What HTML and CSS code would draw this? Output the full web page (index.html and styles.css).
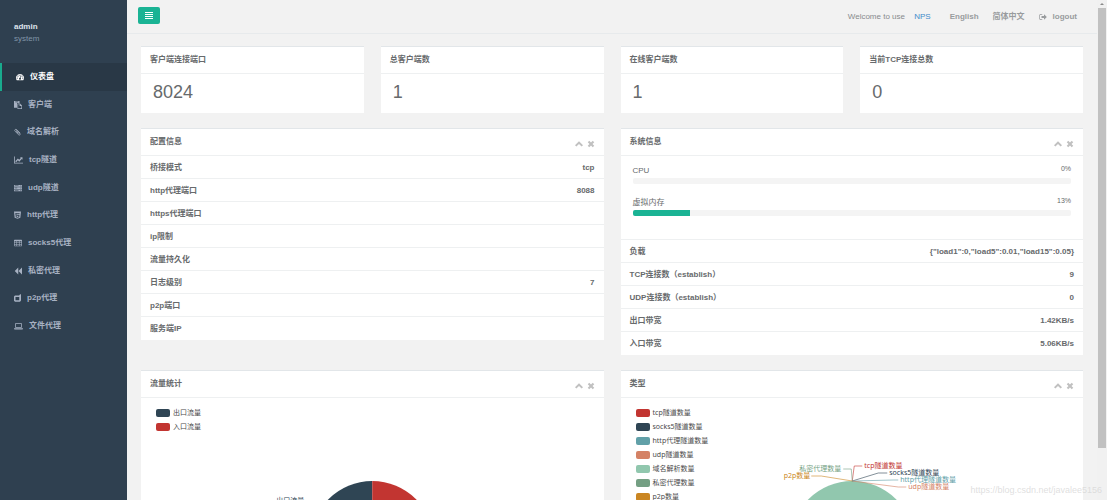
FILE: index.html
```html
<!DOCTYPE html>
<html lang="zh-CN">
<head>
<meta charset="utf-8">
<title>NPS</title>
<link rel="stylesheet" href="styles.css">
</head>
<body>
<div class="app">
  <aside class="sidebar">
    <div class="profile">
      <strong class="profile-name">admin</strong>
      <span class="profile-role">system</span>
    </div>
    <nav class="menu">
      <a class="menu-item active" href="#"><svg class="icon" viewBox="0 0 16 16"><path fill-rule="evenodd" d="M8 2a8 8 0 0 0-6.800 12.200c.2.400.5.500.9.500h11.800c.4 0 .7-.1.900-.5A8 8 0 0 0 8 2zM8 3.300a1.100 1.100 0 1 1 0 2.300 1.100 1.100 0 0 1 0-2.300zM4 5a1.100 1.100 0 1 1 0 2.300A1.100 1.100 0 0 1 4 5zm8 0a1.100 1.100 0 1 1 0 2.300A1.100 1.100 0 0 1 12 5zM2.300 9a1.100 1.100 0 1 1 0 2.300 1.100 1.100 0 0 1 0-2.300zm11.400 0a1.100 1.100 0 1 1 0 2.300 1.100 1.100 0 0 1 0-2.300zM8.800 6l1 .3-.9 3.600a1.800 1.800 0 1 1-1.200-.2z"/></svg>仪表盘</a>
      <a class="menu-item" href="#"><svg class="icon" viewBox="0 0 16 16"><path fill-rule="evenodd" d="M0 0h11v4H6v9.500H0zM2.500 1.200v1.300h6V1.200z"/><path fill-rule="evenodd" d="M7 5h5l4 4v7H7zm1.300 1.300v8.400h6.400V10h-3.500V6.300z"/></svg>客户端</a>
      <a class="menu-item" href="#"><svg class="icon icon-narrow" viewBox="0 0 14 16"><path class="stroke" d="M12.500 10.500L5.500 3.300a2.300 2.300 0 0 0-3.300 3.300l7.200 7a1.700 1.700 0 0 0 2.500-2.400L5.700 5.300a.8.8 0 0 0-1.200 1.200L9 11"/></svg>域名解析</a>
      <a class="menu-item" href="#"><svg class="icon icon-wide" viewBox="0 0 18 16"><path d="M0 1h1.600v12.400H18V15H0z"/><path d="M17 2.500V7.500l-1.600-1.500-5 5.300-2.600-2.600-3.400 3.600-2-2 5.400-5.300 2.600 2.600 3.200-3.500L12 2.500z"/></svg>tcp隧道</a>
      <a class="menu-item" href="#"><svg class="icon" viewBox="0 0 16 16"><path fill-rule="evenodd" d="M0 2h16v3.500H0zM0 6.500h16V10H0zM0 11h16v3.500H0zM1.500 3.200v1H9v-1zm0 4.500v1h5v-1zm0 4.500v1H9v-1zM13 3v1.300h1.500V3zm0 4.500v1.300h1.500V7.500zm0 4.500v1.300h1.500V12z"/></svg>udp隧道</a>
      <a class="menu-item" href="#"><svg class="icon icon-narrow" viewBox="0 0 14 16"><path fill-rule="evenodd" d="M0 1h14l-1.300 12.500L7 15.500l-5.700-2zM2.700 4l.5 5.300h5.700l-.2 2-1.700.5-1.700-.5-.1-1.100H3.400l.2 2.400 3.400 1 3.400-1 .5-5.200H4.900L4.700 5.700h6.400l.2-1.700z"/></svg>http代理</a>
      <a class="menu-item" href="#"><svg class="icon" viewBox="0 0 16 16"><path fill-rule="evenodd" d="M1 1.500h14l1 1v11l-1 1H1l-1-1v-11zM1.200 4.500v2.300h3.700V4.500zm4.900 0v2.300h3.800V4.500zm5 0v2.300h3.700V4.500zM1.200 7.900v2.200h3.700V7.900zm4.900 0v2.200h3.800V7.900zm5 0v2.200h3.700V7.900zM1.200 11.200v2.200h3.700v-2.200zm4.900 0v2.200h3.800v-2.200zm5 0v2.200h3.700v-2.200z"/></svg>socks5代理</a>
      <a class="menu-item" href="#"><svg class="icon" viewBox="0 0 16 16"><path d="M8.500 1v14L1.500 8zM16 1v14L9 8z"/></svg>私密代理</a>
      <a class="menu-item" href="#"><svg class="icon icon-narrow" viewBox="0 0 14 16"><path fill-rule="evenodd" d="M14 0v13l-2 2.500H2l-2-2V5l2-2h8.500V2zM3 6v6.500h7.500V6z"/></svg>p2p代理</a>
      <a class="menu-item" href="#"><svg class="icon icon-wide" viewBox="0 0 18 16"><path fill-rule="evenodd" d="M3.500 2h11l1 1v8l-1 1h-11l-1-1V3zM4 3.500v7h10v-7z"/><path d="M0 12.700h18v1l-1 1.300H1l-1-1.300z"/></svg>文件代理</a>
    </nav>
  </aside>

  <div class="page">
    <header class="topbar">
      <button class="toggle" type="button" aria-label="Toggle menu"><svg class="icon" viewBox="0 0 8 8"><path d="M0 0h8v1H0zM0 2h8v1H0zM0 4h8v1H0zM0 6h8v1H0z"/></svg></button>
      <div class="toplinks">
        <span class="welcome">Welcome to use <a class="brand" href="#">NPS</a></span>
        <a class="toplink lang-en" href="#">English</a>
        <a class="toplink lang-zh" href="#">简体中文</a>
        <a class="toplink logout" href="#"><svg class="icon" viewBox="0 0 16 16"><path d="M6.500 2v1.400H3L1.800 4.600v6.800L3 12.600h3.500V14H2.400L.4 12V4l2-2zM10 2.500L15.700 8 10 13.500V10H5V6h5z"/></svg>logout</a>
      </div>
    </header>

    <main class="content">
      <div class="stats">
        <section class="card"><header class="card-head"><h5>客户端连接端口</h5></header><p class="stat">8024</p></section>
        <section class="card"><header class="card-head"><h5>总客户端数</h5></header><p class="stat">1</p></section>
        <section class="card"><header class="card-head"><h5>在线客户端数</h5></header><p class="stat">1</p></section>
        <section class="card"><header class="card-head"><h5>当前TCP连接总数</h5></header><p class="stat">0</p></section>
      </div>

      <div class="panels">
        <section class="card">
          <header class="card-head"><h5>配置信息</h5><div class="tools">
            <button class="tool" type="button" aria-label="Collapse"><svg class="icon" viewBox="0 0 16 16"><path d="M8 2.500l8 7.800-2.800 2.700L8 8l-5.200 5L0 10.300z"/></svg></button>
            <button class="tool" type="button" aria-label="Close"><svg class="icon" viewBox="0 0 16 16"><path d="M4.500 1.500L8 5l3.500-3.500 3 3L11 8l3.500 3.500-3 3L8 11l-3.500 3.500-3-3L5 8 1.500 4.500z"/></svg></button></div></header>
          <ul class="rows">
            <li><span>桥接模式</span><span>tcp</span></li>
            <li><span>http代理端口</span><span>8088</span></li>
            <li><span>https代理端口</span></li>
            <li><span>ip限制</span></li>
            <li><span>流量持久化</span></li>
            <li><span>日志级别</span><span>7</span></li>
            <li><span>p2p端口</span></li>
            <li><span>服务端IP</span></li>
          </ul>
        </section>

        <section class="card">
          <header class="card-head"><h5>系统信息</h5><div class="tools">
            <button class="tool" type="button" aria-label="Collapse"><svg class="icon" viewBox="0 0 16 16"><path d="M8 2.500l8 7.800-2.800 2.700L8 8l-5.200 5L0 10.300z"/></svg></button>
            <button class="tool" type="button" aria-label="Close"><svg class="icon" viewBox="0 0 16 16"><path d="M4.500 1.500L8 5l3.500-3.500 3 3L11 8l3.500 3.500-3 3L8 11l-3.500 3.500-3-3L5 8 1.500 4.500z"/></svg></button></div></header>
          <div class="meters">
            <div class="meter-label"><span>CPU</span><small>0%</small></div>
            <div class="meter"><div class="meter-fill" style="width: 0%"></div></div>
            <div class="meter-label"><span>虚拟内存</span><small>13%</small></div>
            <div class="meter"><div class="meter-fill" style="width: 13%"></div></div>
          </div>
          <ul class="rows">
            <li><span>负载</span><span>{"load1":0,"load5":0.01,"load15":0.05}</span></li>
            <li><span>TCP连接数（establish）</span><span>9</span></li>
            <li><span>UDP连接数（establish）</span><span>0</span></li>
            <li><span>出口带宽</span><span>1.42KB/s</span></li>
            <li><span>入口带宽</span><span>5.06KB/s</span></li>
          </ul>
        </section>

        <section class="card">
          <header class="card-head"><h5>流量统计</h5><div class="tools">
            <button class="tool" type="button" aria-label="Collapse"><svg class="icon" viewBox="0 0 16 16"><path d="M8 2.500l8 7.800-2.800 2.700L8 8l-5.200 5L0 10.300z"/></svg></button>
            <button class="tool" type="button" aria-label="Close"><svg class="icon" viewBox="0 0 16 16"><path d="M4.500 1.500L8 5l3.500-3.500 3 3L11 8l3.500 3.500-3 3L8 11l-3.500 3.500-3-3L5 8 1.500 4.500z"/></svg></button></div></header>
          <div class="chart">
            <svg class="plot" viewBox="0 0 462 250">
              <path class="fill-navy" d="M231 83a62 62 0 0 0 0 124z"/>
              <path class="fill-red" d="M231 83a62 62 0 0 1 0 124z"/>
              <text class="text-navy" text-anchor="end" x="163" y="105">出口流量</text>
            </svg>
            <ul class="legend">
              <li><i class="swatch navy"></i>出口流量</li>
              <li><i class="swatch red"></i>入口流量</li>
            </ul>
          </div>
        </section>

        <section class="card">
          <header class="card-head"><h5>类型</h5><div class="tools">
            <button class="tool" type="button" aria-label="Collapse"><svg class="icon" viewBox="0 0 16 16"><path d="M8 2.500l8 7.800-2.800 2.700L8 8l-5.200 5L0 10.300z"/></svg></button>
            <button class="tool" type="button" aria-label="Close"><svg class="icon" viewBox="0 0 16 16"><path d="M4.500 1.500L8 5l3.500-3.500 3 3L11 8l3.500 3.500-3 3L8 11l-3.500 3.500-3-3L5 8 1.500 4.500z"/></svg></button></div></header>
          <div class="chart">
            <svg class="plot" viewBox="0 0 462 250">
              <circle class="fill-mint" cx="231" cy="145" r="62"/>
              <path class="line-red" d="M231 83L233 68H241"/>
              <path class="line-navy" d="M231 83L257 75H266"/>
              <path class="line-teal" d="M231 83L272 82H277"/>
              <path class="line-coral" d="M231 83L277 89H285"/>
              <path class="line-green" d="M231 83L230 71H222"/>
              <path class="line-amber" d="M231 83L200 78H190"/>
              <text class="text-red" x="243" y="70">tcp隧道数量</text>
              <text class="text-navy" x="268" y="77">socks5隧道数量</text>
              <text class="text-teal" x="279" y="84">http代理隧道数量</text>
              <text class="text-coral" x="287" y="91">udp隧道数量</text>
              <text class="text-green" text-anchor="end" x="220" y="73">私密代理数量</text>
              <text class="text-amber" text-anchor="end" x="189" y="80">p2p数量</text>
            </svg>
            <ul class="legend">
              <li><i class="swatch red"></i>tcp隧道数量</li>
              <li><i class="swatch navy"></i>socks5隧道数量</li>
              <li><i class="swatch teal"></i>http代理隧道数量</li>
              <li><i class="swatch coral"></i>udp隧道数量</li>
              <li><i class="swatch mint"></i>域名解析数量</li>
              <li><i class="swatch green"></i>私密代理数量</li>
              <li><i class="swatch amber"></i>p2p数量</li>
            </ul>
          </div>
        </section>
      </div>
    </main>
  </div>

  <div class="scrollbar" aria-hidden="true">
    <div class="scroll-arrow"></div>
    <div class="scroll-thumb"></div>
  </div>
  <div class="watermark">https://blog.csdn.net/javalee5156</div>
</div>
</body>
</html>
```

FILE: styles.css
```css
* { box-sizing: border-box; }

body {
  margin: 0;
  background: #f2f2f2;
  color: #676a6c;
  font: 8px/12px "Liberation Sans", "Noto Sans CJK SC", sans-serif;
}

a { color: inherit; text-decoration: none; }
h5, p, ul { margin: 0; padding: 0; }
ul { list-style: none; }
button { padding: 0; border: 0; background: none; color: inherit; font: inherit; }

.icon { display: block; flex: none; width: 8px; height: 8px; fill: currentColor; }
.icon-narrow { width: 7px; }
.icon-wide { width: 9px; }
.stroke { fill: none; stroke: currentColor; stroke-width: 1.6; }

.app { position: relative; display: flex; height: 100vh; overflow: hidden; }

/* Sidebar */
.sidebar { flex: none; width: 127px; background: #2f4050; color: #a7b1c2; }
.profile { display: flex; flex-direction: column; padding: 21px 14px 19px; line-height: 11px; gap: 1px; }
.profile-name { color: #dfe4ed; }
.profile-role { color: #8095a8; }
.menu { display: grid; grid-auto-rows: 1fr; height: 277px; }
.menu-item { display: flex; align-items: center; gap: 6px; padding: 0 14px; font-weight: 700; }
.menu-item.active { border-left: 2px solid #19aa8d; background: #293846; color: #fff; }

/* Top bar */
.page { flex: 1; min-width: 0; }
.topbar {
  display: flex;
  align-items: center;
  justify-content: space-between;
  height: 34px;
  padding: 0 20px 2px 11px;
  border-bottom: 1px solid #e7eaec;
}
.toggle {
  padding: 5px 7px 4px;
  border-radius: 2px;
  background: #1ab394;
  color: #fff;
}
.toplinks { display: flex; align-items: center; padding-top: 2px; color: #999c9e; }
.welcome { color: #888b8d; }
.brand { margin-left: 7px; color: #428bca; }
.toplink { font-weight: 700; }
.lang-en { margin-left: 19px; }
.lang-zh { margin-left: 14px; }
.logout { display: flex; align-items: center; gap: 6px; margin-left: 14px; }

/* Cards */
.content { display: flex; flex-direction: column; gap: 15px; padding: 12px 14px; }
.stats { display: grid; grid-template-columns: repeat(4, 1fr); gap: 17px; }
.panels { display: grid; grid-template-columns: repeat(2, 1fr); gap: 15px 17px; align-items: start; }
.card { border-top: 1px solid #e2e6e9; background: #fff; }
.card-head { display: flex; align-items: center; justify-content: space-between; height: 26px; padding: 0 9px; }
.card-head h5 { font-size: 8px; font-weight: 700; }
.tools { display: flex; gap: 4px; padding-top: 4px; color: #c0c0c0; }
.stat { padding: 9px 12px 12px; border-top: 1px solid #eef0f1; font-size: 18px; line-height: 18px; }

.rows { padding-bottom: 1px; font-weight: 700; }
.rows li {
  display: flex;
  align-items: center;
  justify-content: space-between;
  height: 23px;
  padding: 2px 9px 0;
  border-top: 1px solid #eef0f1;
}

.meters { padding: 7px 12px 12px; border-top: 1px solid #eef0f1; }
.meter-label { display: flex; justify-content: space-between; height: 14px; margin-bottom: 1px; line-height: 15px; }
.meter-label small { font-size: 7px; line-height: 12px; }
.meter { height: 6px; margin-bottom: 11px; border-radius: 2px; background: #f4f4f4; overflow: hidden; }
.meter-fill { height: 100%; background: #1ab394; }

/* Charts */
.chart { display: grid; border-top: 1px solid #eef0f1; font: 7px/14px "Noto Sans", "Noto Sans CJK SC", sans-serif; color: #4a4a4a; }
.plot, .legend { grid-area: 1 / 1; }
.plot { width: 100%; height: 250px; }
.legend { padding: 8px 15px; }
.legend li { display: flex; align-items: center; gap: 3px; height: 14px; }
.swatch { width: 14px; height: 8px; border-radius: 2px; }
.plot path[class^="line"] { fill: none; stroke-width: 0.6; }

.red { background: #c23531; }
.navy { background: #2f4554; }
.teal { background: #61a0a8; }
.coral { background: #d48265; }
.mint { background: #91c7ae; }
.green { background: #749f83; }
.amber { background: #ca8622; }
.fill-red, .text-red { fill: #c23531; }
.fill-navy, .text-navy { fill: #2f4554; }
.fill-mint { fill: #91c7ae; }
.text-teal { fill: #61a0a8; }
.text-coral { fill: #d48265; }
.text-green { fill: #749f83; }
.text-amber { fill: #ca8622; }
.line-red { stroke: #c23531; }
.line-navy { stroke: #2f4554; }
.line-teal { stroke: #61a0a8; }
.line-coral { stroke: #d48265; }
.line-green { stroke: #749f83; }
.line-amber { stroke: #ca8622; }

/* Scrollbar */
.scrollbar { display: flex; flex: none; flex-direction: column; align-items: center; width: 10px; background: #f1f1f1; }
.scroll-arrow { margin: 3px 0; border: 2px solid transparent; border-top: 0; border-bottom: 2px solid #8a8a8a; }
.scroll-thumb { width: 8px; height: 88%; background: #c1c1c1; }

.watermark {
  position: absolute;
  right: 5px;
  bottom: 3px;
  color: rgba(215, 215, 215, 0.8);
  font: 9px/14px "Liberation Sans", sans-serif;
}
```
